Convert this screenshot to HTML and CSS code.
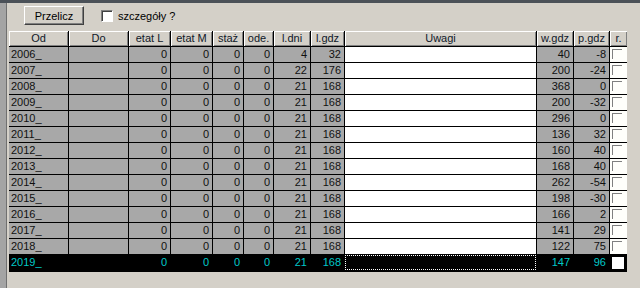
FILE: index.html
```html
<!DOCTYPE html>
<html lang="pl">
<head>
  <meta charset="UTF-8"/>
  <title>Przelicz</title>
  <link rel="stylesheet" href="styles.css">
</head>
<body>

<div class="window">
  <div class="edge"></div>

  <div class="content">
    <div class="toolbar">
      <button class="btn">Przelicz</button>
      <span class="check"></span>
      <span class="check-label">szczegóły ?</span>
    </div>

    <div class="grid" id="grid">
      <div class="th">Od</div>
      <div class="th">Do</div>
      <div class="th">etat L</div>
      <div class="th">etat M</div>
      <div class="th">staż</div>
      <div class="th">ode.</div>
      <div class="th">l.dni</div>
      <div class="th">l.gdz</div>
      <div class="th">Uwagi</div>
      <div class="th">w.gdz</div>
      <div class="th">p.gdz</div>
      <div class="th">r.</div>
    </div>
  </div>
</div>

<script>
  const rows = [
    [2006, 4, 32, 40, -8],
    [2007, 22, 176, 200, -24],
    [2008, 21, 168, 368, 0],
    [2009, 21, 168, 200, -32],
    [2010, 21, 168, 296, 0],
    [2011, 21, 168, 136, 32],
    [2012, 21, 168, 160, 40],
    [2013, 21, 168, 168, 40],
    [2014, 21, 168, 262, -54],
    [2015, 21, 168, 198, -30],
    [2016, 21, 168, 166, 2],
    [2017, 21, 168, 141, 29],
    [2018, 21, 168, 122, 75],
    [2019, 21, 168, 147, 96]
  ];

  const grid = document.getElementById('grid');

  function cell(text, cls) {
    const d = document.createElement('div');
    d.className = 'td ' + (cls || '');
    d.textContent = text;
    grid.appendChild(d);
    return d;
  }

  rows.forEach(function (r, i) {
    const sel = i === rows.length - 1 ? ' sel' : '';
    cell(r[0] + '_', 'txt' + sel);
    cell('', sel);
    cell('0', 'num' + sel);
    cell('0', 'num' + sel);
    cell('0', 'num' + sel);
    cell('0', 'num' + sel);
    cell(r[1], 'num' + sel);
    cell(r[2], 'num' + sel);
    cell('', 'note' + sel);
    cell(r[3], 'num' + sel);
    cell(r[4], 'num' + sel);
    const box = cell('', 'flag' + sel);
    box.appendChild(document.createElement('span'));
  });
</script>

</body>
</html>
```

FILE: styles.css
```css
* {
  box-sizing: border-box;
}

body {
  margin: 0;
  background: #d4d0c8;
  font-family: 'Liberation Sans', Arial, sans-serif;
  font-size: 11px;
  color: #101010;
}

.window {
  display: flex;
  height: 288px;
  border-top: 3px solid #4b5158;
}

.edge {
  width: 7px;
  background: #a4a4a4;
  border-right: 1px solid #707070;
}

.content {
  flex: 1;
  padding-left: 2px;
}

.toolbar {
  display: flex;
  align-items: center;
  height: 28px;
  padding: 3px 0 6px 15px;
}

.btn {
  width: 60px;
  height: 19px;
  padding: 0;
  font-family: inherit;
  font-size: 11px;
  color: #000;
  background: #d4d0c8;
  border: 1px solid;
  border-color: #fff #404040 #404040 #fff;
  box-shadow: inset -1px -1px 0 #808080;
}

.check {
  width: 12px;
  height: 12px;
  margin-left: 17px;
  background: #fff;
  border: 1px solid;
  border-color: #808080 #fff #fff #808080;
  box-shadow: inset 1px 1px 0 #404040;
}

.check-label {
  margin-left: 5px;
  color: #000;
}

.grid {
  display: grid;
  grid-template-columns: 59px 59px 41px 41px 30px 29px 36px 33px 191px 36px 35px 17px;
  grid-auto-rows: 15px;
  gap: 1px;
  width: fit-content;
  padding-bottom: 2px;
  background: #000;
}

.th {
  background: #d4d0c8;
  text-align: center;
  line-height: 15px;
  color: #101828;
  box-shadow: inset 1px 1px 0 #fff, inset -1px -1px 0 #808080;
}

.td {
  background: #a8a8a8;
  line-height: 15px;
  white-space: nowrap;
  overflow: hidden;
}

.txt {
  padding-left: 2px;
}

.num {
  text-align: right;
  padding-right: 3px;
}

.note {
  background: #fff;
}

.flag {
  background: #fffffb;
}

.flag span {
  display: block;
  width: 10px;
  height: 10px;
  margin: 2px 0 0 2px;
  border-top: 1px solid #808080;
  border-left: 1px solid #808080;
}

.td.sel {
  background: #000;
  color: #00c8c8;
}

.note.sel {
  outline: 1px dotted #fff;
  outline-offset: -1px;
}

.flag.sel span {
  width: 12px;
  height: 12px;
  margin: 2px 0 0 2px;
  border: none;
  background: #fff;
}
```
